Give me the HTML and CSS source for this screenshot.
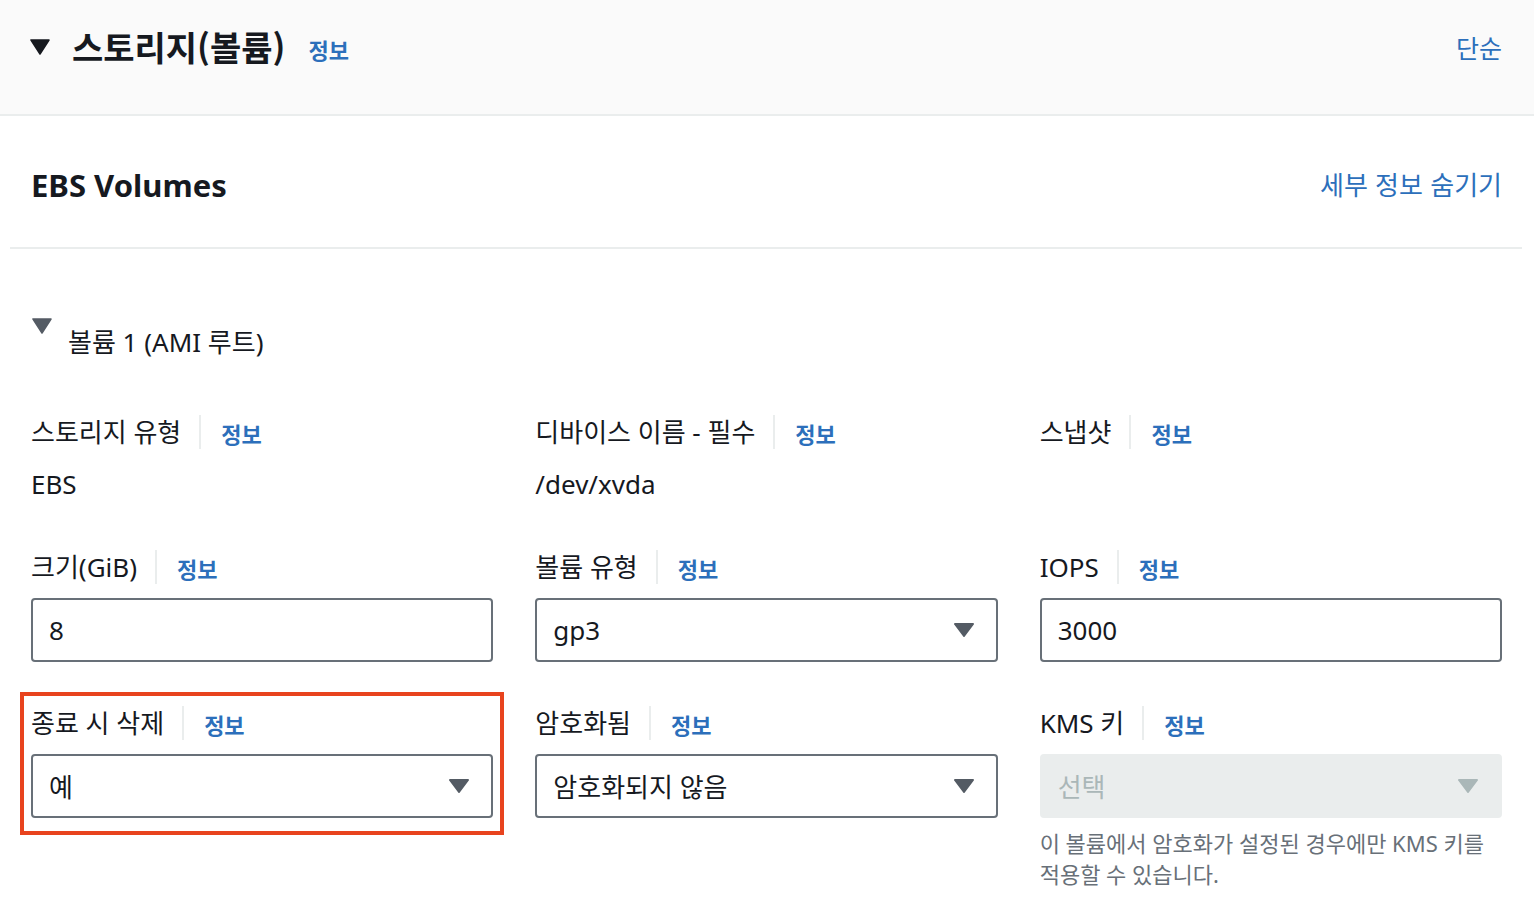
FILE: index.html
```html
<!DOCTYPE html>
<html lang="ko">
<head>
  <meta charset="UTF-8" />
  <meta name="viewport" content="width=device-width, initial-scale=1.0"/>
  <title>스토리지(볼륨)</title>
  <link rel="stylesheet" href="styles.css">
</head>
<body>

  <div class="panel-header">
    <svg class="caret" width="20" height="16" viewBox="0 0 20 16"><polygon points="1,1 19,1 10,15" fill="#16191f" stroke="#16191f" stroke-width="1.5" stroke-linejoin="round"/></svg>
    <h2>스토리지(볼륨)</h2>
    <a class="info" href="#">정보</a>
    <a class="simple-link" href="#">단순</a>
  </div>

  <div class="ebs-head">
    <h3>EBS Volumes</h3>
    <a class="detail-link" href="#">세부 정보 숨기기</a>
  </div>

  <div class="volume">
    <div class="volume-title">
      <svg class="caret small" width="20" height="16" viewBox="0 0 20 16"><polygon points="1,1 19,1 10,15" fill="#545b64" stroke="#545b64" stroke-width="1.5" stroke-linejoin="round"/></svg>
      <span>볼륨 1 (AMI 루트)</span>
    </div>

    <div class="fields">
      <div class="field">
        <div class="label">스토리지 유형<a class="info" href="#">정보</a></div>
        <div class="value">EBS</div>
      </div>
      <div class="field">
        <div class="label">디바이스 이름 - 필수<a class="info" href="#">정보</a></div>
        <div class="value">/dev/xvda</div>
      </div>
      <div class="field">
        <div class="label">스냅샷<a class="info" href="#">정보</a></div>
      </div>

      <div class="field">
        <div class="label">크기(GiB)<a class="info" href="#">정보</a></div>
        <input class="input" type="text" value="8" />
      </div>
      <div class="field">
        <div class="label">볼륨 유형<a class="info" href="#">정보</a></div>
        <div class="select">
          <span>gp3</span>
          <svg width="20" height="14" viewBox="0 0 20 14"><polygon points="1,1 19,1 10,13" fill="#545b64" stroke="#545b64" stroke-width="2" stroke-linejoin="round"/></svg>
        </div>
      </div>
      <div class="field">
        <div class="label">IOPS<a class="info" href="#">정보</a></div>
        <input class="input" type="text" value="3000" />
      </div>

      <div class="field highlighted">
        <div class="label">종료 시 삭제<a class="info" href="#">정보</a></div>
        <div class="select">
          <span>예</span>
          <svg width="20" height="14" viewBox="0 0 20 14"><polygon points="1,1 19,1 10,13" fill="#545b64" stroke="#545b64" stroke-width="2" stroke-linejoin="round"/></svg>
        </div>
      </div>
      <div class="field">
        <div class="label">암호화됨<a class="info" href="#">정보</a></div>
        <div class="select">
          <span>암호화되지 않음</span>
          <svg width="20" height="14" viewBox="0 0 20 14"><polygon points="1,1 19,1 10,13" fill="#545b64" stroke="#545b64" stroke-width="2" stroke-linejoin="round"/></svg>
        </div>
      </div>
      <div class="field">
        <div class="label">KMS 키<a class="info" href="#">정보</a></div>
        <div class="select disabled">
          <span>선택</span>
          <svg width="20" height="14" viewBox="0 0 20 14"><polygon points="1,1 19,1 10,13" fill="#aab7b8" stroke="#aab7b8" stroke-width="2" stroke-linejoin="round"/></svg>
        </div>
        <p class="hint">이 볼륨에서 암호화가 설정된 경우에만 KMS 키를 적용할 수 있습니다.</p>
      </div>
    </div>
  </div>

</body>
</html>
```

FILE: styles.css
```css
body {
  margin: 0;
  background: #ffffff;
  color: #16191f;
  font-family: 'Noto Sans', 'Noto Sans CJK KR', sans-serif;
}

a {
  text-decoration: none;
  color: #2c6fbb;
}

/* Panel header */
.panel-header {
  box-sizing: border-box;
  display: flex;
  align-items: center;
  height: 116px;
  padding: 0 32px 20px 30px;
  background: #fafafa;
  border-bottom: 2px solid #eaeded;
}

.panel-header h2 {
  margin: 0 23px 0 22px;
  font-size: 34px;
  font-weight: bold;
  line-height: 42px;
  font-family: 'Noto Sans CJK KR', sans-serif;
}

.panel-header .info {
  padding-top: 4px;
}

.simple-link {
  margin-left: auto;
  font-size: 25px;
  font-family: 'Noto Sans CJK KR', sans-serif;
  line-height: 36px;
}

.caret {
  display: block;
  flex-shrink: 0;
}

/* EBS Volumes */
.ebs-head {
  display: flex;
  align-items: center;
  justify-content: space-between;
  height: 131px;
  margin: 0 12px 0 10px;
  padding: 0 20px 0 21px;
  border-bottom: 2px solid #eaeded;
}

.ebs-head h3 {
  margin: 0;
  font-size: 31px;
  font-weight: bold;
  padding-top: 6px;
}

.detail-link {
  font-size: 26px;
  font-family: 'Noto Sans CJK KR', sans-serif;
  padding-top: 4px;
}

/* Volume */
.volume {
  padding: 75px 32px 0 31px;
}

.volume-title {
  display: flex;
  align-items: flex-start;
  gap: 16px;
  font-size: 26px;
  line-height: 36px;
}

.volume-title .small {
  margin-top: -6px;
  margin-left: 1px;
}

.fields {
  display: grid;
  grid-template-columns: repeat(3, 1fr);
  column-gap: 42px;
  row-gap: 43px;
  margin-top: 54px;
}

.field {
  position: relative;
}

.label {
  display: flex;
  align-items: center;
  font-size: 26px;
  line-height: 36px;
  margin-bottom: 13px;
}

.info {
  font-size: 22px;
  font-weight: bold;
  font-family: 'Noto Sans CJK KR', sans-serif;
  line-height: 32px;
}

.label .info {
  margin-left: 18px;
  padding-left: 20px;
  border-left: 2px solid #eaeded;
  padding-top: 2px;
}

.value {
  font-size: 26px;
  line-height: 36px;
  margin-top: 16px;
  padding-bottom: 4px;
}

.input,
.select {
  box-sizing: border-box;
  width: 100%;
  height: 64px;
  border: 2px solid #687078;
  border-radius: 4px;
  padding: 0 22px 0 16px;
  font-size: 26px;
  font-family: 'Noto Sans', 'Noto Sans CJK KR', sans-serif;
  color: #16191f;
  background: #fff;
  margin: 0;
}

.select {
  display: flex;
  align-items: center;
  justify-content: space-between;
}

.select svg {
  display: block;
}

.select.disabled {
  border-color: #eaeded;
  background: #eaeded;
  color: #aab7b8;
}

.hint {
  margin: 10px 0 0;
  font-size: 22px;
  line-height: 31px;
  color: #687078;
  word-break: keep-all;
}

/* red annotation frame */
.highlighted {
  align-self: start;
}

.highlighted::after {
  content: "";
  position: absolute;
  top: -13px;
  left: -11px;
  right: -11px;
  bottom: -17px;
  border: 4px solid #e8431e;
  pointer-events: none;
}
```
